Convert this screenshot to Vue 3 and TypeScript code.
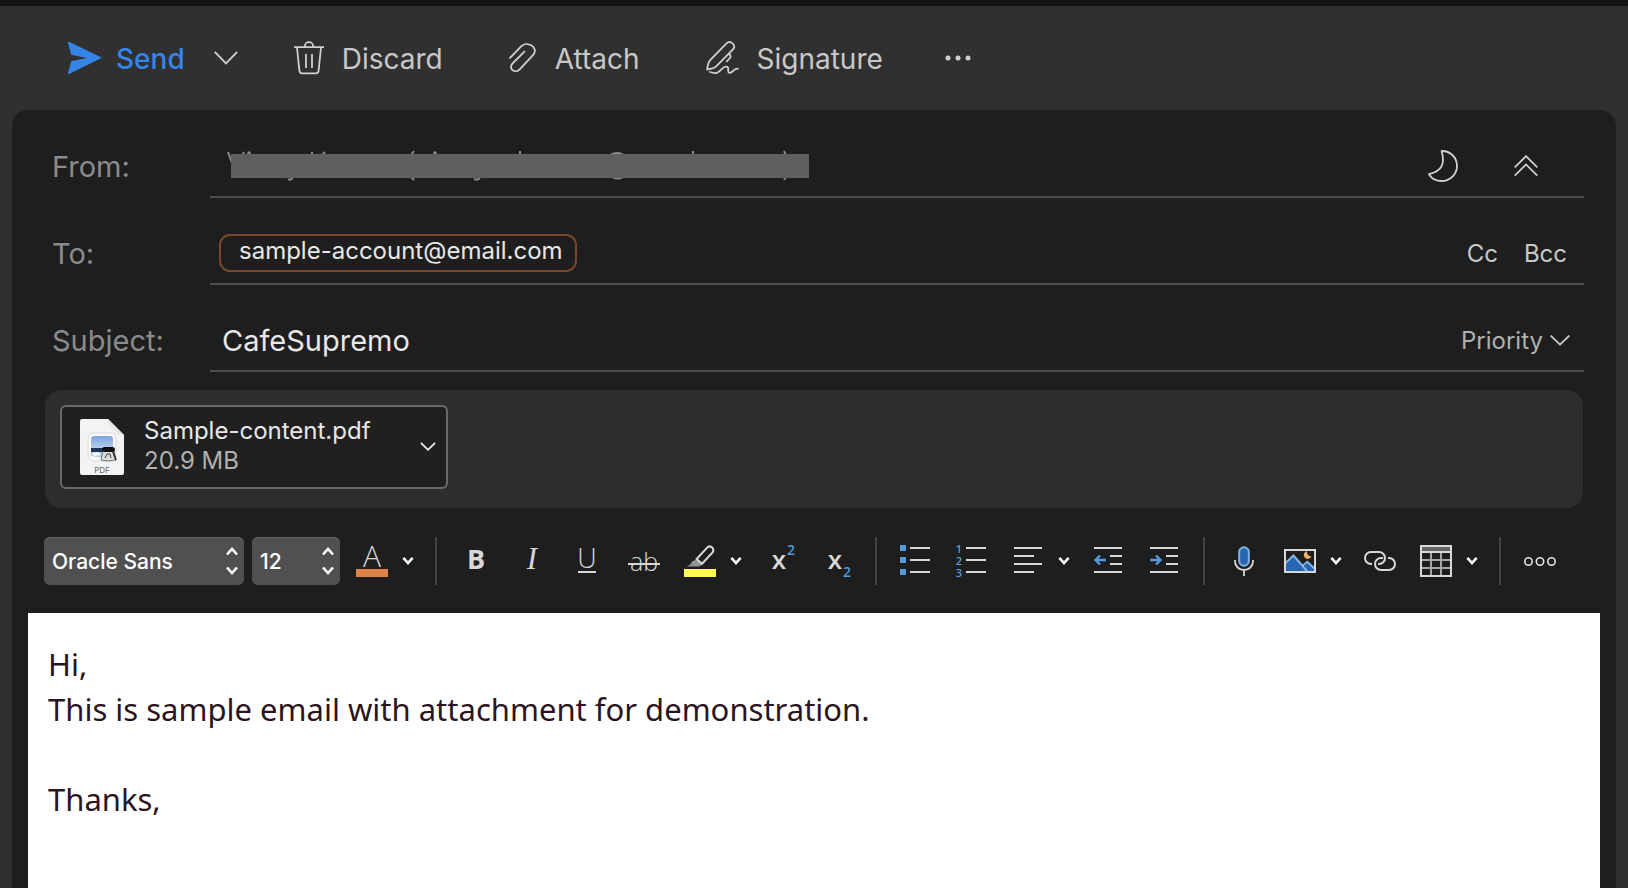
<script setup lang="ts">
import { ref } from 'vue'

const subject = ref('CafeSupremo')
const recipient = ref('')
const font = ref('Oracle Sans')
const size = ref('12')
const message = ref('Hi,\nThis is sample email with attachment for demonstration.\n\nThanks,')
</script>

<template>
  <main class="window">
    <nav class="actions" aria-label="Message actions">
      <button class="action send" type="button">
        <svg width="34" height="34" viewBox="0 0 34 34" aria-hidden="true">
          <path d="M.6 .6 34 16.8 .6 33.2 0 32 3.2 20.2 19 17 3.2 13.8 0 2Z" fill="#3584e8" />
        </svg>
        <span>Send</span>
      </button>
      <button class="action more-send" type="button" aria-label="Send options">
        <svg width="24" height="14" viewBox="0 0 24 14" class="line" aria-hidden="true">
          <path d="M.8.8 12 12.4 23.2.8" />
        </svg>
      </button>
      <button class="action discard" type="button">
        <svg width="30" height="34" viewBox="0 0 30 34" class="line" aria-hidden="true">
          <path d="M0 6.2H30M10.8 6V5.4A4.2 4.2 0 0 1 19.2 5.4V6M3 6.5 5.4 29.6Q5.8 32.4 8.2 32.4H21.8Q24.2 32.4 24.6 29.6L27 6.5M12 13V27M18 13V27" />
        </svg>
        <span>Discard</span>
      </button>
      <button class="action attach" type="button">
        <svg width="28" height="32" viewBox="0 0 28 32" class="line" aria-hidden="true">
          <path d="M1 15.8 12.2 4.3C18-1.6 30 5.2 24.4 12.7L10.7 27.4C6.4 32-1.2 27 3.4 21.6L15.4 9.6" stroke-linecap="round" />
        </svg>
        <span>Attach</span>
      </button>
      <button class="action sign" type="button">
        <svg width="33" height="34" viewBox="0 0 33 34" class="line" aria-hidden="true">
          <path d="M1.2 28.4C1.6 23.8 2.4 20.8 4.4 18.8L20.5 2.4C24.4-1.2 30.2 4 27.4 8L10.2 25.3C8 27.4 4.6 27.7 1.2 28.4ZM22.8 12.8Q26.6 15.4 22.6 18.4L20.8 20.4M4 31C10.4 33.4 12.2 31.6 15.4 28.3 19 24.7 22.8 24.8 22.2 28.7 21.8 32.7 24.4 32.6 27 30 28.8 28.2 30.5 27.5 31.8 27.8" stroke-linecap="round" />
        </svg>
        <span>Signature</span>
      </button>
      <button class="action" type="button" aria-label="More actions">
        <svg width="26" height="6" viewBox="0 0 26 6" fill="#d0d0d0" aria-hidden="true">
          <circle cx="3" cy="3" r="2.5" /><circle cx="13" cy="3" r="2.5" /><circle cx="23" cy="3" r="2.5" />
        </svg>
      </button>
    </nav>

    <section class="panel" aria-label="New message">
      <div class="headers">
        <div class="row">
          <span class="label">From:</span>
          <div class="field from">
            <svg class="sender" width="583" height="32" viewBox="0 0 583 32" role="img" aria-label="Sender hidden">
              <path d="M2 2 7 16M18 2 16 6M86 2V6M99 2 96 5M188 1 185 5M294 1V6M467 1V6M558 1 560 5M185 27 188 30M62 29Q65 31 67 27M248 29Q252 31 254 27M558 30 560 27M384 5Q391 1 398 5M386 27Q391 30 397 27" />
              <circle cx="23" cy="3" r="1.8" /><circle cx="209" cy="3" r="1.8" />
              <rect x="5" y="4" width="578" height="24" />
            </svg>
            <div class="side round">
              <button type="button" aria-label="Switch background">
                <svg width="30" height="32" viewBox="0 0 30 32" class="line" aria-hidden="true">
                  <path d="M13.6 1C21.8.6 29 7.2 29 15.8 29 24.3 22.2 31 13.8 31 8.2 31 3.4 28.4 1 24.2 14.8 21 17 13.2 13.6 1Z" stroke-linejoin="round" />
                </svg>
              </button>
              <button type="button" aria-label="Collapse header">
                <svg width="24" height="22" viewBox="0 0 24 22" class="line" aria-hidden="true">
                  <path d="M.7 12.4 12 1.2 23.3 12.4M.7 20.6 12 9.4 23.3 20.6" />
                </svg>
              </button>
            </div>
          </div>
        </div>
        <div class="row">
          <label class="label" for="to">To:</label>
          <div class="field to">
            <span class="chip">sample-account@email.com</span>
            <input id="to" v-model="recipient" type="text" />
            <div class="side copies">
              <button type="button">Cc</button>
              <button type="button">Bcc</button>
            </div>
          </div>
        </div>
        <div class="row">
          <label class="label" for="subject">Subject:</label>
          <div class="field subject">
            <input id="subject" v-model="subject" type="text" />
            <button class="priority" type="button">
              Priority
              <svg width="20" height="11" viewBox="0 0 20 11" class="line" aria-hidden="true">
                <path d="M.7.7 10 9.6 19.3.7" />
              </svg>
            </button>
          </div>
        </div>
      </div>

      <div class="attachments">
        <button class="file" type="button">
          <svg width="44" height="58" viewBox="0 0 44 58" aria-hidden="true">
            <defs>
              <linearGradient id="sky" x1="0" y1="0" x2="0" y2="1">
                <stop offset="0" stop-color="#7da4dc" /><stop offset="1" stop-color="#b5cdf0" />
              </linearGradient>
              <linearGradient id="fold" x1="0" y1="1" x2="1" y2="0">
                <stop offset="0" stop-color="#fff" /><stop offset=".5" stop-color="#e2e2e2" /><stop offset="1" stop-color="#bbb" />
              </linearGradient>
            </defs>
            <path d="M2 1H28L44 17V55Q44 57 42 57H2Q0 57 0 55V3Q0 1 2 1Z" fill="#f3f3f3" />
            <path d="M28 1 44 17H30Q28 17 28 15Z" fill="url(#fold)" />
            <rect x="8" y="15" width="28" height="28" rx="6" fill="#fafafa" stroke="#d8d8d8" />
            <path d="M14 18H30Q33 18 33 21V30H11V21Q11 18 14 18Z" fill="url(#sky)" />
            <path d="M11 30H33V34H11Z" fill="#20345f" />
            <path d="M11 34H33V37L25 40 11 38Z" fill="#a7cce0" />
            <path d="M12 35 18 34 21 37 14 38Z" fill="#fff" />
            <path d="M23 33H34L36 42Q28 44 21 42Z" fill="#dadde0" stroke="#777" />
            <rect x="22" y="29" width="13" height="5" rx="2.5" fill="#111" />
            <path d="M25 40 27 36 30 36 31 40" fill="none" stroke="#444" />
            <path d="M33 34 36 42" stroke="#222" stroke-width="1.5" />
            <text x="22" y="55" text-anchor="middle" font-family="Inter, sans-serif" font-size="8" fill="#666">PDF</text>
          </svg>
          <span class="meta">
            <span>Sample-content.pdf</span>
            <span class="bytes">20.9 MB</span>
          </span>
          <svg width="16" height="10" viewBox="0 0 16 10" class="line" aria-hidden="true">
            <path d="M1.4 1.3 8 7.8 14.6 1.3" stroke-linecap="round" stroke="#eee" />
          </svg>
        </button>
      </div>

      <div class="format" role="toolbar" aria-label="Formatting">
        <label class="picker family">
          <select v-model="font" aria-label="Font"><option>Oracle Sans</option></select>
          <svg width="12" height="28" viewBox="0 0 12 28" aria-hidden="true"><path d="M1 7.5 6 2 11 7.5M1 20.5 6 26 11 20.5" /></svg>
        </label>
        <label class="picker points">
          <select v-model="size" aria-label="Font size"><option>12</option></select>
          <svg width="12" height="28" viewBox="0 0 12 28" aria-hidden="true"><path d="M1 7.5 6 2 11 7.5M1 20.5 6 26 11 20.5" /></svg>
        </label>
        <button class="tool split" type="button" aria-label="Font color">
          <svg class="icon" viewBox="0 0 32 32" aria-hidden="true">
            <text x="16" y="22" class="thin" font-size="30">A</text>
            <path d="M0 24H32V32H0Z" fill="#df8344" />
          </svg>
          <svg class="caret" viewBox="0 0 12 10" aria-hidden="true"><path d="M1.4 1.8 6 7 10.6 1.8" /></svg>
        </button>
        <span class="rule"></span>
        <button class="tool" type="button" aria-label="Bold">
          <svg class="icon" viewBox="0 0 32 32" aria-hidden="true"><text x="16" y="24" class="heavy" font-size="27">B</text></svg>
        </button>
        <button class="tool" type="button" aria-label="Italic">
          <svg class="icon" viewBox="0 0 32 32" aria-hidden="true"><text x="16" y="24" class="slant" font-size="31">I</text></svg>
        </button>
        <button class="tool" type="button" aria-label="Underline">
          <svg class="icon" viewBox="0 0 32 32" aria-hidden="true">
            <text x="15" y="23" class="thin" font-size="27">U</text><path d="M6 26H24V28H6Z" />
          </svg>
        </button>
        <button class="tool" type="button" aria-label="Strikethrough">
          <svg class="icon" viewBox="0 0 32 32" aria-hidden="true">
            <text x="16" y="26" class="thin" font-size="25">ab</text><path d="M0 18H32V20H0Z" />
          </svg>
        </button>
        <button class="tool split" type="button" aria-label="Highlight">
          <svg class="icon" viewBox="0 0 32 32" aria-hidden="true">
            <path d="M12.4 14.4 18 20 15 21.6H2.4Q7 19.6 8 16.4Z" fill="#949494" />
            <path d="M12.6 14 23.4 2.4C26.8-.5 31 4 28.6 7.4L18 18.8Z" fill="none" stroke="#d8d8d8" stroke-width="2" />
            <path d="M0 24H32V32H0Z" fill="#fffb4f" />
          </svg>
          <svg class="caret" viewBox="0 0 12 10" aria-hidden="true"><path d="M1.4 1.8 6 7 10.6 1.8" /></svg>
        </button>
        <button class="tool" type="button" aria-label="Superscript">
          <svg class="icon" viewBox="0 0 32 32" aria-hidden="true">
            <text x="15" y="24" class="semi" font-size="26">x</text><text x="27" y="10" class="digit" font-size="14">2</text>
          </svg>
        </button>
        <button class="tool" type="button" aria-label="Subscript">
          <svg class="icon" viewBox="0 0 32 32" aria-hidden="true">
            <text x="15" y="24" class="semi" font-size="26">x</text><text x="27" y="32" class="digit" font-size="14">2</text>
          </svg>
        </button>
        <span class="rule"></span>
        <button class="tool" type="button" aria-label="Bulleted list">
          <svg class="icon" viewBox="0 0 32 32" aria-hidden="true">
            <path d="M0 0H6V6H0ZM0 12H6V18H0ZM0 24H6V30H0Z" fill="#559bdb" />
            <path d="M10 2H30V4H10ZM10 14H30V16H10ZM10 26H30V28H10Z" />
          </svg>
        </button>
        <button class="tool" type="button" aria-label="Numbered list">
          <svg class="icon" viewBox="0 0 32 32" aria-hidden="true">
            <text x="3" y="8" class="digit" font-size="11">1</text>
            <text x="3" y="20" class="digit" font-size="11">2</text>
            <text x="3" y="32" class="digit" font-size="11">3</text>
            <path d="M10 2H30V4H10ZM10 14H30V16H10ZM10 26H30V28H10Z" />
          </svg>
        </button>
        <button class="tool split" type="button" aria-label="Alignment">
          <svg class="icon" viewBox="0 0 32 32" aria-hidden="true">
            <path d="M2 2H30V4H2ZM2 10H22V12H2ZM2 18H30V20H2ZM2 26H22V28H2Z" />
          </svg>
          <svg class="caret" viewBox="0 0 12 10" aria-hidden="true"><path d="M1.4 1.8 6 7 10.6 1.8" /></svg>
        </button>
        <button class="tool" type="button" aria-label="Decrease indent">
          <svg class="icon" viewBox="-2 0 32 32" aria-hidden="true">
            <path d="M0 2H28V4H0ZM16 10H28V12H16ZM16 18H28V20H16ZM0 26H28V28H0Z" />
            <path d="M12 15H2M6 10.5 1.5 15 6 19.5" class="arrow" />
          </svg>
        </button>
        <button class="tool" type="button" aria-label="Increase indent">
          <svg class="icon" viewBox="-2 0 32 32" aria-hidden="true">
            <path d="M0 2H28V4H0ZM16 10H28V12H16ZM16 18H28V20H16ZM0 26H28V28H0Z" />
            <path d="M0 15H10M6 10.5 10.5 15 6 19.5" class="arrow" />
          </svg>
        </button>
        <span class="rule"></span>
        <button class="tool" type="button" aria-label="Dictate">
          <svg class="icon" viewBox="0 0 32 32" aria-hidden="true">
            <rect x="11.2" y="2.2" width="9.6" height="18.6" rx="4.8" fill="#2765b0" stroke="#83b4e3" stroke-width="2" />
            <path d="M7 15V16.5A9 8.5 0 0 0 25 16.5V15M16 25V31" fill="none" stroke="#d8d8d8" stroke-width="1.8" />
          </svg>
        </button>
        <button class="tool split" type="button" aria-label="Picture">
          <svg class="icon" viewBox="0 0 32 32" aria-hidden="true">
            <path d="M2 18 9.5 10.5 20 22 24 17 30 22V27H2Z" fill="#2765b0" />
            <path d="M1.5 18 9.5 10.5 23 26M19 20.5 23.3 16.8 31 24" fill="none" stroke="#83b4e3" stroke-width="2" />
            <path d="M23 6A4 4 0 1 0 27.5 11.5 4.5 4.5 0 0 1 23 6Z" fill="#eeb061" />
            <path d="M1 5H31V27H1Z" fill="none" stroke="#d8d8d8" stroke-width="2" />
          </svg>
          <svg class="caret" viewBox="0 0 12 10" aria-hidden="true"><path d="M1.4 1.8 6 7 10.6 1.8" /></svg>
        </button>
        <button class="tool" type="button" aria-label="Link">
          <svg class="icon" viewBox="0 0 32 32" aria-hidden="true">
            <path d="M8 19H7A6 6 0 0 1 7 7H15A6 6 0 0 1 15 19H14M24 13H25A6 6 0 0 1 25 25H17A6 6 0 0 1 17 13H19" fill="none" stroke="#d8d8d8" stroke-width="2" />
          </svg>
        </button>
        <button class="tool split" type="button" aria-label="Table">
          <svg class="icon" viewBox="0 0 32 32" aria-hidden="true">
            <path d="M2 2H30V6H2Z" fill="#666" />
            <path d="M11 8V30M21 8V30M2 15H30M2 23H30" stroke="#a6a6a6" stroke-width="2" />
            <path d="M1 1H31V31H1ZM2 7H30" fill="none" stroke="#d8d8d8" stroke-width="2" />
          </svg>
          <svg class="caret" viewBox="0 0 12 10" aria-hidden="true"><path d="M1.4 1.8 6 7 10.6 1.8" /></svg>
        </button>
        <span class="rule"></span>
        <button class="tool" type="button" aria-label="More formatting">
          <svg class="icon" viewBox="0 0 32 32" stroke="#e4e4e4" stroke-width="1.6" aria-hidden="true">
            <g fill="none"><circle cx="4.5" cy="16.5" r="3.7" /><circle cx="16" cy="16.5" r="3.7" /><circle cx="27.5" cy="16.5" r="3.7" /></g>
          </svg>
        </button>
      </div>

      <textarea v-model="message" class="editor" aria-label="Message body" spellcheck="false"></textarea>
    </section>
  </main>
</template>

<style>
body {
  background: #303030;
}
</style>

<style scoped>
.window {
  box-sizing: border-box;
  min-height: 100vh;
  display: flex;
  flex-direction: column;
  padding: 0 12px;
  border-top: 6px solid #131313;
  background: #303030;
  color: #c8c8c8;
  font-family: Inter, "Liberation Sans", sans-serif;
  font-size: 24px;
}
button,
input,
select,
textarea {
  box-sizing: border-box;
  margin: 0;
  padding: 0;
  border: 0;
  background: none;
  color: inherit;
  font: inherit;
}
svg {
  display: block;
  flex: none;
}
.line {
  fill: none;
  stroke: #d0d0d0;
  stroke-width: 1.8;
}
.actions {
  display: flex;
  align-items: center;
  height: 104px;
  padding-left: 56px;
  font-size: 28px;
}
.action {
  display: flex;
  align-items: center;
  gap: 18px;
}
.action span {
  padding-top: 2px;
}
.send {
  gap: 14px;
  color: #3584e8;
  font-weight: 500;
}
.more-send {
  margin: 0 56px 0 29px;
}
.discard,
.attach {
  margin-right: 66px;
}
.sign {
  margin-right: 62px;
}
.panel {
  flex: 1;
  display: flex;
  flex-direction: column;
  border-radius: 16px 16px 0 0;
  background: #1e1e1e;
}
.headers {
  padding: 1px 32px 0 40px;
}
.row {
  display: grid;
  grid-template-columns: 158px 1fr;
  min-height: 87px;
}
.label {
  align-self: center;
  padding-top: 24px;
  color: #8b8b8b;
  font-size: 29px;
}
.field {
  display: flex;
  align-items: center;
  justify-content: space-between;
  padding-top: 25px;
  border-bottom: 2px solid #4d4d4d;
}
.from {
  padding-left: 16px;
  padding-right: 46px;
}
.sender {
  fill: #8b8b8b;
}
.sender path {
  fill: none;
  stroke: #8b8b8b;
  stroke-width: 2;
}
.sender rect {
  fill: #5f5f5f;
}
.side {
  display: flex;
  align-items: center;
}
.round {
  gap: 56px;
}
.to {
  padding-left: 9px;
  padding-right: 17px;
}
.to input {
  flex: 1;
  min-width: 0;
  outline: 0;
}
.copies {
  gap: 26px;
}
.chip {
  box-sizing: border-box;
  height: 38px;
  padding: 0 12px 0 18px;
  border: 2px solid #7b472b;
  border-radius: 11px;
  color: #e8e8e8;
  font-size: 24px;
  line-height: 30px;
}
.subject {
  padding-left: 12px;
  padding-right: 14px;
}
.subject input {
  flex: 1;
  min-width: 0;
  outline: 0;
  color: #e8e8e8;
  font-size: 29px;
}
.priority {
  display: flex;
  align-items: center;
  gap: 7px;
  color: #b0b0b0;
}
.attachments {
  display: flex;
  margin: 18px 33px 0;
  padding: 15px 15px 19px;
  border-radius: 16px;
  background: #2d2d2d;
}
.file {
  display: flex;
  align-items: center;
  width: 388px;
  height: 84px;
  padding: 0 10px 0 18px;
  border: 2px solid #6a6a6a;
  border-radius: 6px;
  background: #202020;
  text-align: left;
}
.meta {
  flex: 1;
  display: flex;
  flex-direction: column;
  padding-bottom: 2px;
  padding-left: 20px;
  color: #e8e8e8;
  line-height: 30px;
}
.bytes {
  color: #b0b0b0;
}
.format {
  display: flex;
  align-items: center;
  padding: 29px 32px 28px;
}
.picker {
  display: grid;
  align-items: center;
  margin-right: 8px;
  border-radius: 6px;
  box-shadow: inset 0 1px #666;
  background: #505050;
  color: #fff;
  font-size: 21px;
  font-weight: 500;
}
.picker select {
  grid-area: 1 / 1;
  width: 100%;
  height: 48px;
  padding-left: 8px;
  appearance: none;
}
.picker svg {
  grid-area: 1 / 1;
  justify-self: end;
  margin-right: 6px;
  pointer-events: none;
}
.picker path,
.caret path {
  fill: none;
  stroke: #fff;
  stroke-width: 2.6;
}
.family {
  width: 200px;
}
.points {
  width: 88px;
  margin-right: 4px;
}
.tool {
  display: flex;
  align-items: center;
  gap: 14px;
  padding: 0 12px;
}
.split {
  padding-right: 10px;
}
.icon {
  width: 32px;
  height: 32px;
  overflow: visible;
  fill: #d8d8d8;
}
.caret {
  width: 12px;
  height: 10px;
}
.rule {
  width: 2px;
  height: 48px;
  margin: 0 11px;
  background: #424242;
}
.icon text {
  text-anchor: middle;
  font-family: "Open Sans", "Noto Sans", sans-serif;
}
.icon .thin {
  font-weight: 350;
}
.icon .heavy {
  font-weight: 700;
}
.icon .semi {
  font-weight: 600;
}
.icon .slant {
  font-family: "Liberation Serif", serif;
  font-style: italic;
}
.icon .digit {
  fill: #559bdb;
  font-weight: 600;
}
.arrow {
  fill: none;
  stroke: #559bdb;
  stroke-width: 2.4;
}
.editor {
  flex: 1;
  min-height: 270px;
  margin: 0 16px;
  padding: 29px 20px;
  outline: 0;
  resize: none;
  background: #fff;
  color: #2b1420;
  font-family: "Noto Sans", "Open Sans", sans-serif;
  font-size: 31px;
  line-height: 45px;
}
</style>
